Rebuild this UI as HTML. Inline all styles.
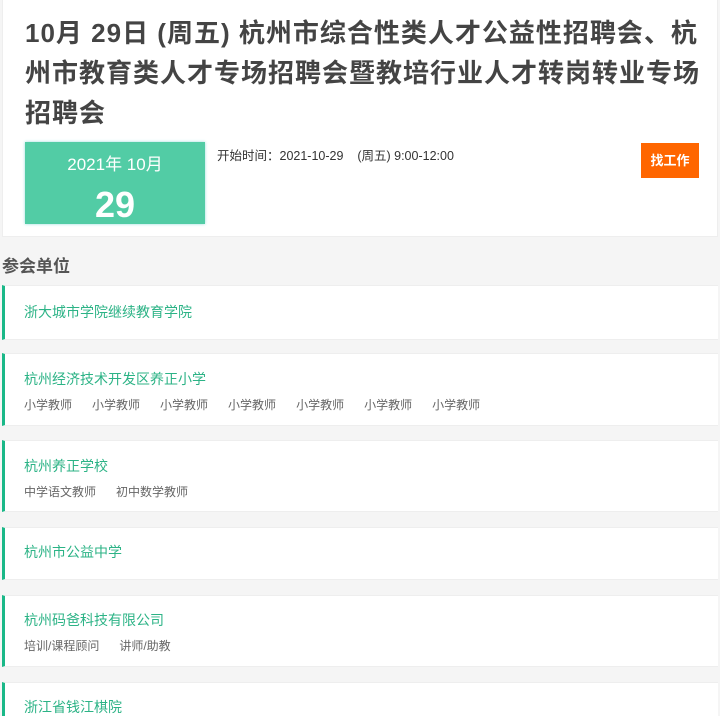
<!DOCTYPE html>
<html><head><meta charset="utf-8"><style>
*{margin:0;padding:0;box-sizing:border-box}
html,body{width:720px;height:716px;overflow:hidden}
body{background:#f5f5f5;font-family:"Liberation Sans","Noto Sans CJK SC",sans-serif;position:relative}
.top{position:absolute;left:2px;top:0;width:716px;height:237px;background:#fff;border:1px solid #eee;border-top:none}
h1{position:absolute;left:22px;top:13px;width:700px;font-size:26px;letter-spacing:1px;line-height:40px;font-weight:bold;color:#444;white-space:nowrap}
.date{position:absolute;left:22px;top:142px;width:180px;height:82px;background:#52cca5;color:#fff;text-align:center;box-shadow:0 0 3px #9dd}
.date .m{font-size:17px;margin-top:13px;line-height:20px}
.date .d{font-size:36px;font-weight:bold;line-height:40px;margin-top:10px}
.time{position:absolute;left:214px;top:145px;font-size:12.5px;color:#333}
.btn{position:absolute;left:638px;top:143px;width:58px;height:35px;background:#ff6600;color:#fff;font-size:13px;font-weight:bold;line-height:35px;text-align:center}
.sec{position:absolute;left:2px;top:252px;font-size:17px;font-weight:bold;color:#555}
.card{position:absolute;left:2px;width:716px;background:#fff;border-left:3px solid #1ab888;border-top:1px solid #eee;border-bottom:1px solid #eee}
.card .n{position:absolute;left:19px;font-size:14px;color:#2cb386}
.card .j{position:absolute;left:19px;font-size:12px;color:#666;white-space:nowrap}
.card .j span{margin-right:20px}
</style></head><body>
<div class="top">
<h1>10月 29日 (周五) 杭州市综合性类人才公益性招聘会、杭<br>州市教育类人才专场招聘会暨教培行业人才转岗转业专场<br>招聘会</h1>
<div class="date"><div class="m">2021年 10月</div><div class="d">29</div></div>
<div class="time">开始时间：2021-10-29 &nbsp;&nbsp;&nbsp;(周五) 9:00-12:00</div>
<div class="btn">找工作</div>
</div>
<div class="sec">参会单位</div>
<div class="card" style="top:285px;height:55px"><div class="n" style="top:16px">浙大城市学院继续教育学院</div></div>
<div class="card" style="top:353px;height:73px"><div class="n" style="top:15px">杭州经济技术开发区养正小学</div><div class="j" style="top:42px"><span>小学教师</span><span>小学教师</span><span>小学教师</span><span>小学教师</span><span>小学教师</span><span>小学教师</span><span>小学教师</span></div></div>
<div class="card" style="top:440px;height:72px"><div class="n" style="top:15px">杭州养正学校</div><div class="j" style="top:42px"><span>中学语文教师</span><span>初中数学教师</span></div></div>
<div class="card" style="top:527px;height:53px"><div class="n" style="top:14px">杭州市公益中学</div></div>
<div class="card" style="top:595px;height:72px"><div class="n" style="top:14px">杭州码爸科技有限公司</div><div class="j" style="top:41px"><span>培训/课程顾问</span><span>讲师/助教</span></div></div>
<div class="card" style="top:682px;height:60px"><div class="n" style="top:14px">浙江省钱江棋院</div></div>
</body></html>
